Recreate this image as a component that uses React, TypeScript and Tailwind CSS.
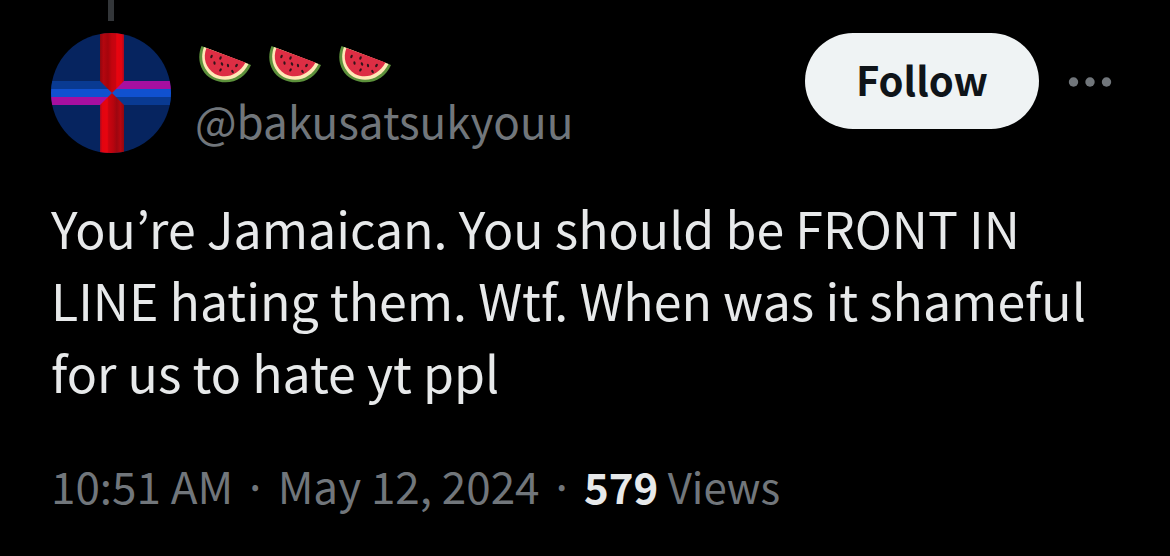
function Avatar() {
  return (
    <svg viewBox="0 0 120 120" className="size-[120px] shrink-0 rounded-full" role="img" aria-label="Profile picture">
      <defs>
        <linearGradient id="redTop">
          <stop offset="0" stopColor="#8f0810" />
          <stop offset="0.15" stopColor="#b5060f" />
          <stop offset="0.33" stopColor="#a5040c" />
          <stop offset="0.5" stopColor="#c4040e" />
          <stop offset="0.65" stopColor="#c90410" />
          <stop offset="0.7" stopColor="#e8040f" />
          <stop offset="0.9" stopColor="#e2040f" />
          <stop offset="1" stopColor="#a50a22" />
        </linearGradient>
        <linearGradient id="redBottom">
          <stop offset="0" stopColor="#a50a22" />
          <stop offset="0.1" stopColor="#e2040f" />
          <stop offset="0.3" stopColor="#e8040f" />
          <stop offset="0.36" stopColor="#c90410" />
          <stop offset="0.55" stopColor="#b8040e" />
          <stop offset="0.7" stopColor="#9c0610" />
          <stop offset="0.85" stopColor="#b5060f" />
          <stop offset="1" stopColor="#8f0810" />
        </linearGradient>
      </defs>
      <rect width="120" height="120" fill="#06245f" />
      <rect y="48" width="61" height="8" fill="#093a92" />
      <rect x="61" y="48" width="59" height="8" fill="#a60fa0" />
      <rect y="56" width="120" height="8" fill="#1051d0" />
      <rect y="64" width="61" height="8" fill="#a60fa0" />
      <rect x="61" y="64" width="59" height="8" fill="#093a92" />
      <path d="M49 0H73V48L61 60L49 48Z" fill="url(#redTop)" />
      <path d="M61 60L73 72V120H49V72Z" fill="url(#redBottom)" />
    </svg>
  );
}

function Watermelon() {
  return (
    <svg viewBox="0 0 52 37" className="h-[37px] w-[52px]" aria-hidden="true">
      <path d="M2.500 0C-3 13 2 27 13 33C29 41 45.500 34 52 19Z" fill="#5c913b" />
      <path d="M5 1C0.500 13 4.500 25 14.500 31C28 37.500 42.500 32 49.500 18Z" fill="#ffe8b6" />
      <path d="M7.500 2C3.500 12 6.500 22 16 28C27 33.500 39.500 29 46.500 16.500Z" fill="#dd2e44" />
      <g fill="#31141a">
        <ellipse cx="12.500" cy="10.500" rx="1.100" ry="1.800" transform="rotate(25 12.500 10.500)" />
        <ellipse cx="21.500" cy="12" rx="1.100" ry="1.800" transform="rotate(25 21.500 12)" />
        <ellipse cx="15.500" cy="17" rx="1.100" ry="1.800" transform="rotate(-10 15.500 17)" />
        <ellipse cx="23" cy="18" rx="1.100" ry="1.800" transform="rotate(-25 23 18)" />
        <ellipse cx="29" cy="19.500" rx="1.100" ry="1.800" transform="rotate(-10 29 19.500)" />
        <ellipse cx="37.500" cy="19.500" rx="1.100" ry="1.800" transform="rotate(35 37.500 19.500)" />
        <ellipse cx="21.500" cy="24" rx="1.100" ry="1.800" transform="rotate(30 21.500 24)" />
        <ellipse cx="33.500" cy="25.500" rx="1.100" ry="1.800" transform="rotate(-30 33.500 25.500)" />
      </g>
    </svg>
  );
}

export default function App() {
  return (
    <main className="min-h-screen bg-black px-[51px] pb-8 font-['Noto_Sans_CJK_JP','Noto_Sans',sans-serif] text-[#e7e9ea]">
      <article>
        <div className="flex w-[120px] justify-center">
          <div className="h-[21px] w-1.5 bg-[#333639]" />
        </div>
        <header className="mt-3 mr-[7px] flex items-start">
          <Avatar />
          <div className="ml-6 min-w-0 flex-1">
            <div className="flex h-[62px] items-center gap-[18px] pl-1" role="img" aria-label="Three watermelon slices">
              <Watermelon />
              <Watermelon />
              <Watermelon />
            </div>
            <a href="#profile" className="block text-[44px] leading-[50px] text-[#71767b]">
              @bakusatsukyouu
            </a>
          </div>
          <button type="button" className="h-24 w-[234px] shrink-0 rounded-full bg-[#eff3f4] pb-1 text-[40px] leading-[60px] font-bold text-[#0f1419]">
            Follow
          </button>
          <button type="button" aria-label="More" className="ml-[29px] flex h-24 shrink-0 items-center pt-0.5">
            <svg viewBox="0 0 44 10" className="h-2.5 w-11" fill="#71767b" aria-hidden="true">
              <circle cx="5.500" cy="5" r="4.700" />
              <circle cx="22" cy="5" r="4.700" />
              <circle cx="38.500" cy="5" r="4.700" />
            </svg>
          </button>
        </header>
        <p className="mt-[38px] text-[50px] leading-[72px]">
          You’re Jamaican. You should be FRONT IN LINE hating them. Wtf. When was it shameful for us to hate yt ppl
        </p>
        <footer className="mt-12 text-[44px] leading-[60px] text-[#71767b]">
          <time dateTime="2024-05-12T10:51">10:51 AM · May 12, 2024</time>
          {" · "}
          <span className="text-[42px]">
            <strong className="font-bold text-[#e7e9ea]">579</strong> Views
          </span>
        </footer>
      </article>
    </main>
  );
}
